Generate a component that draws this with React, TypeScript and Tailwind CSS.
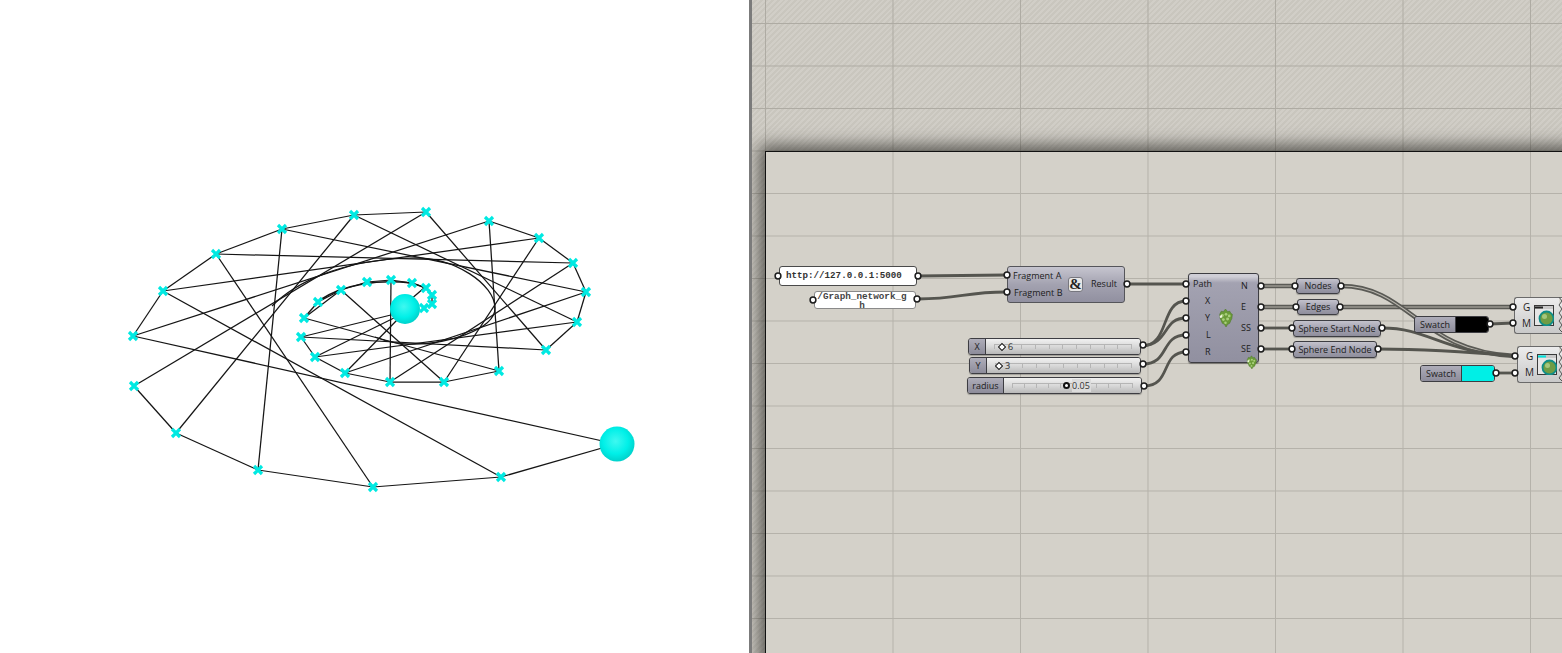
const points: [number, number][] = [
  [405, 309], [424, 308], [432, 304], [432, 295], [426, 288], [412, 283], [391, 280], [367, 282],
  [341, 290], [318, 302], [304, 318], [301, 337], [315, 357], [345, 373], [390, 382], [444, 382],
  [499, 371], [546, 350], [577, 322], [586, 292], [573, 263], [539, 238], [489, 221], [426, 212],
  [354, 215], [282, 229], [216, 254], [163, 291], [133, 336], [134, 386], [176, 433], [258, 470],
  [373, 487], [501, 477], [616, 444],
]

const rows = [[11, 16], [17, 22], [23, 28], [29, 34]]

const edges: [number, number][] = []
rows.forEach(([from, to]) => {
  for (let i = from; i < to; i++) edges.push([i, i + 1])
})
for (let i = 17; i <= 34; i++) edges.push([i, i - 6])
edges.push([14, 6], [15, 8], [16, 10], [10, 9], [9, 8], [10, 8], [8, 7], [7, 6], [6, 5], [5, 4], [4, 3], [3, 2], [2, 1])

const GraphView = () => (
  <svg width="750" height="653" viewBox="0 0 750 653" className="block">
    <defs>
      <radialGradient id="ball" cx="0.46" cy="0.42" r="0.6">
        <stop offset="0" stopColor="#3ff8f0" />
        <stop offset="0.6" stopColor="#00f0e8" />
        <stop offset="1" stopColor="#00cfc9" />
      </radialGradient>
    </defs>
    <g stroke="#151515" strokeWidth="1.25" fill="none">
      {edges.map(([a, b]) => (
        <line key={`${a}-${b}`} x1={points[a][0]} y1={points[a][1]} x2={points[b][0]} y2={points[b][1]} />
      ))}
      <line x1="301" y1="337" x2="395" y2="314" />
      <line x1="315" y1="357" x2="398" y2="316" />
      <line x1="345" y1="373" x2="400" y2="317" />
      <line x1="424" y1="288" x2="410" y2="300" />
      <path d="M272 306C295 283 340 260 410 258C455 256 495 285 495 308C495 330 445 345 410 344C395 344 385 341 375 337" />
      <path d="M320 300C345 283 380 281 400 282C415 283 428 287 433 296" strokeWidth="1.6" />
    </g>
    <circle cx="405" cy="309" r="15" fill="url(#ball)" />
    <circle cx="617" cy="444" r="17.5" fill="url(#ball)" />
    <g stroke="#00e9e2" strokeWidth="3.2" strokeLinecap="butt">
      {points.slice(1, 34).map(([x, y]) => (
        <path key={`${x}-${y}`} d={`M${x - 4} ${y - 4}L${x + 4} ${y + 4}M${x + 4} ${y - 4}L${x - 4} ${y + 4}`} />
      ))}
    </g>
  </svg>
)

const wires = [
  'M918 276L1006 275',
  'M918 299C960 299 965 292 1006 292',
  'M1127 284L1186 284',
  'M1142 346C1170 346 1160 301 1186 301',
  'M1142 346C1170 344 1162 318 1186 318',
  'M1143 364C1170 364 1160 335 1186 335',
  'M1144 386C1172 386 1160 352 1186 352',
  'M1261 328L1293 328',
  'M1261 349L1293 349',
  'M1382 328C1430 328 1440 352 1515 356',
  'M1378 349C1420 349 1470 352 1515 356',
  'M1490 324L1513 323',
  'M1496 373L1515 373',
]

// list wires carry a lighter line down the middle
const listWires = [
  'M1261 286L1296 286',
  'M1261 307L1297 307',
  'M1341 307L1513 307',
  'M1341 286C1410 286 1420 352 1515 356',
]

const Wires = () => (
  <svg width="1562" height="653" viewBox="0 0 1562 653" className="absolute inset-0" fill="none">
    {listWires.map((d) => (
      <g key={d}>
        <path d={d} stroke="#5a5a55" strokeWidth="4.4" />
        <path d={d} stroke="#b9b6ae" strokeWidth="1.1" />
      </g>
    ))}
    {wires.map((d) => (
      <path key={d} d={d} stroke="#55554f" strokeWidth="2.8" />
    ))}
  </svg>
)

const grips: [number, number][] = [
  [778, 276], [918, 276], [813, 300], [917, 299], [1007, 275], [1007, 292], [1127, 284],
  [1143, 345], [1143, 364], [1144, 386],
  [1186, 284], [1186, 301], [1186, 318], [1186, 335], [1186, 352],
  [1261, 286], [1261, 307], [1261, 328], [1261, 349],
  [1295, 286], [1341, 286], [1296, 307], [1340, 307], [1292, 328], [1382, 328], [1292, 349], [1378, 349],
  [1490, 324], [1496, 373], [1513, 307], [1513, 323], [1515, 356], [1515, 373],
]

const Grips = () => (
  <svg width="1562" height="653" viewBox="0 0 1562 653" className="absolute inset-0" fill="#fff" stroke="#1c1c1c" strokeWidth="1.5">
    {grips.map(([x, y]) => (
      <circle key={`${x}-${y}`} cx={x} cy={y} r="2.9" />
    ))}
    <path d="M1559 297l3 4l-3 4l3 4l-3 4l3 4l-3 4l3 4l-3 4l3 3" fill="#d4d1c9" stroke="#555" strokeWidth="1" />
    <path d="M1559 346l3 4l-3 4l3 4l-3 4l3 4l-3 4l3 4l-3 4l3 3" fill="#d4d1c9" stroke="#555" strokeWidth="1" />
  </svg>
)

const Hop = ({ className }: { className: string }) => (
  <svg viewBox="0 0 14 18" className={className}>
    <path d="M3 3l2 .5L7 1l2 2.500l2-.5l1 2l1.500 1l-.5 4l-1 2l-1 2.500l-2 1l-1.500 2.500l-1.500-2.500l-2-1l-1-2.500l-1-2l-.5-4L2 5z" fill="#6a9a38" stroke="#4a7426" strokeWidth="0.5" />
    <g fill="#a9cf7c">
      <circle cx="4" cy="7" r="1.400" />
      <circle cx="7.500" cy="6" r="1.300" />
      <circle cx="10.500" cy="7.500" r="1.300" />
      <circle cx="5" cy="11" r="1.300" />
      <circle cx="9" cy="10.500" r="1.400" />
      <circle cx="7" cy="14" r="1.200" />
    </g>
    <path d="M1.500 7.500l2-1l.5 2.500l-2 .5z" fill="#eef5dd" />
  </svg>
)

const PreviewIcon = ({ tab }: { tab: string }) => (
  <svg viewBox="0 0 20 21" className="absolute left-[19px] top-[7px] h-[21px] w-[20px]">
    <rect x="0.5" y="0.5" width="19" height="20" fill="#e6e6e6" stroke="#3a3a3a" />
    <rect x="1" y="1" width="18" height="3" fill="#c8c8c8" />
    <rect x="1" y="1.500" width="8" height="2" fill={tab} />
    <circle cx="12.500" cy="13.500" r="7" fill="#6f9c45" stroke="#0f8d88" strokeWidth="1.800" />
    <circle cx="10.500" cy="11.500" r="2.500" fill="#a5c77c" />
  </svg>
)

const capsule =
  'absolute flex items-center justify-center rounded-[3px] border border-[#3d3d42] bg-gradient-to-b from-[#c3c2cc] via-[#a3a2b0] to-[#8f8e9c] text-[9px] text-[#1c1c1c] shadow-[0_1px_1px_rgba(0,0,0,0.25)]'

const sliderLabel =
  'flex h-full shrink-0 items-center justify-center border-r border-[#3d3d42] bg-gradient-to-b from-[#aeadb9] to-[#8d8c9a] text-[9px] text-[#1c1c1c]'

const sliderTrack =
  'relative h-full flex-1 bg-gradient-to-b from-[#f1f1f1] via-[#d9d9d9] to-[#b9b9b9]'

const sliderBox =
  'absolute flex overflow-hidden rounded-[3px] border border-[#3d3d42] shadow-[0_1px_1px_rgba(0,0,0,0.25)]'

const Ticks = ({ className }: { className: string }) => (
  <div className={`absolute top-[5px] flex h-[4px] justify-between border-t border-[#b5b5b5] ${className}`}>
    {Array.from({ length: 11 }, (_, i) => (
      <span key={i} className="h-[4px] w-px bg-[#b5b5b5]" />
    ))}
  </div>
)

const Canvas = () => (
  <div className="absolute inset-0 overflow-hidden font-['Open_Sans','Noto_Sans',sans-serif]">
    <Wires />

    <div className="absolute left-[779px] top-[266px] flex h-[20px] w-[138px] items-center rounded-[3px] border border-[#4a4a4a] bg-white pl-[6px] font-['Liberation_Mono',monospace] text-[9.2px] font-bold text-[#333]">
      http://127.0.0.1:5000
    </div>
    <div className="absolute left-[814px] top-[291px] h-[18px] w-[102px] rounded-[3px] border border-[#8a8a8a] bg-white pr-[6px] text-center font-['Liberation_Mono',monospace] text-[9.3px] font-bold leading-[9px] text-[#444]">
      /Graph_network_g
      <br />h
    </div>

    <div className="absolute left-[1007px] top-[266px] h-[37px] w-[118px] rounded-[3px] border border-[#55555a] bg-gradient-to-b from-[#c6c5cf] via-[#a3a2b0] to-[#9190a0] text-[9px] text-[#1c1c1c]">
      <span className="absolute left-[5px] top-[2px]">Fragment A</span>
      <span className="absolute left-[6px] top-[19px]">Fragment B</span>
      <span className="absolute left-[60px] top-[10px] flex h-[15px] w-[15px] items-center justify-center rounded-[3px] border border-[#77777f] bg-[#e7e7e7] font-['Liberation_Serif',serif] text-[15px] font-bold leading-none text-[#222]">
        &amp;
      </span>
      <span className="absolute left-[83px] top-[10px]">Result</span>
    </div>

    <div className={`${sliderBox} left-[968px] top-[338px] h-[17px] w-[173px]`}>
      <div className={`${sliderLabel} w-[17px]`}>X</div>
      <div className={sliderTrack}>
        <Ticks className="left-[8px] right-[8px]" />
        <span className="absolute left-[13px] top-[5px] h-[6px] w-[6px] rotate-45 border border-[#111] bg-white" />
        <span className="absolute left-[22px] top-[1px] text-[9px] text-[#333]">6</span>
      </div>
    </div>
    <div className={`${sliderBox} left-[969px] top-[357px] h-[17px] w-[172px]`}>
      <div className={`${sliderLabel} w-[17px]`}>Y</div>
      <div className={sliderTrack}>
        <Ticks className="left-[8px] right-[8px]" />
        <span className="absolute left-[9px] top-[5px] h-[6px] w-[6px] rotate-45 border border-[#111] bg-white" />
        <span className="absolute left-[18px] top-[1px] text-[9px] text-[#333]">3</span>
      </div>
    </div>
    <div className={`${sliderBox} left-[967px] top-[377px] h-[17px] w-[175px]`}>
      <div className={`${sliderLabel} w-[36px]`}>radius</div>
      <div className={sliderTrack}>
        <Ticks className="left-[8px] right-[8px]" />
        <span className="absolute left-[59px] top-[4px] h-[7px] w-[7px] rounded-full border-2 border-[#111] bg-white" />
        <span className="absolute left-[68px] top-[1px] bg-[#dcdcdc] pr-px text-[9px] leading-[13px] text-[#333]">0.05</span>
      </div>
    </div>

    <div className="absolute left-[1188px] top-[273px] h-[90px] w-[71px] rounded-[3px] border border-[#3d3d42] bg-gradient-to-b from-[#cfced6] from-[3%] via-[#a3a2b1] via-[10%] to-[#9190a0] text-[9px] text-[#1c1c1c] shadow-[0_1px_1px_rgba(0,0,0,0.35)]">
      <span className="absolute left-[4px] top-[3px]">Path</span>
      <span className="absolute left-[16px] top-[20px]">X</span>
      <span className="absolute left-[16px] top-[37px]">Y</span>
      <span className="absolute left-[17px] top-[54px]">L</span>
      <span className="absolute left-[16px] top-[71px]">R</span>
      <span className="absolute left-[52px] top-[5px]">N</span>
      <span className="absolute left-[52px] top-[26px]">E</span>
      <span className="absolute left-[52px] top-[47px]">SS</span>
      <span className="absolute left-[52px] top-[68px]">SE</span>
      <Hop className="absolute left-[29px] top-[34px] h-[19px] w-[15px]" />
    </div>
    <Hop className="absolute left-[1246px] top-[355px] h-[14px] w-[11px]" />

    <div className={`${capsule} left-[1296px] top-[278px] h-[16px] w-[44px]`}>Nodes</div>
    <div className={`${capsule} left-[1297px] top-[299px] h-[16px] w-[42px]`}>Edges</div>
    <div className={`${capsule} left-[1293px] top-[320px] h-[17px] w-[88px]`}>Sphere Start Node</div>
    <div className={`${capsule} left-[1293px] top-[341px] h-[17px] w-[84px]`}>Sphere End Node</div>

    <div className="absolute left-[1414px] top-[316px] flex h-[17px] w-[75px] overflow-hidden rounded-[3px] border border-[#3d3d42] text-[9px] text-[#1c1c1c]">
      <div className={`${sliderLabel} w-[41px]`}>Swatch</div>
      <div className="flex-1 bg-black" />
    </div>
    <div className="absolute left-[1420px] top-[365px] flex h-[17px] w-[75px] overflow-hidden rounded-[3px] border border-[#3d3d42] text-[9px] text-[#1c1c1c]">
      <div className={`${sliderLabel} w-[41px]`}>Swatch</div>
      <div className="flex-1 bg-[#00efe6]" />
    </div>

    <div className="absolute left-[1514px] top-[297px] h-[37px] w-[48px] rounded-l-[3px] border border-r-0 border-[#6a6a6a] bg-gradient-to-b from-[#ececec] to-[#c9c9c9] text-[10px] text-[#1c1c1c]">
      <span className="absolute left-[8px] top-[2px]">G</span>
      <span className="absolute left-[7px] top-[18px]">M</span>
      <PreviewIcon tab="#222222" />
    </div>
    <div className="absolute left-[1517px] top-[346px] h-[37px] w-[45px] rounded-l-[3px] border border-r-0 border-[#6a6a6a] bg-gradient-to-b from-[#ececec] to-[#c9c9c9] text-[10px] text-[#1c1c1c]">
      <span className="absolute left-[8px] top-[2px]">G</span>
      <span className="absolute left-[7px] top-[18px]">M</span>
      <PreviewIcon tab="#00e5e0" />
    </div>

    <Grips />
  </div>
)

const App = () => (
  <div className="relative flex h-[653px] w-[1562px] overflow-hidden bg-white">
    <div className="w-[749px] shrink-0 bg-white shadow-[2px_0_4px_rgba(0,0,0,0.3)]">
      <GraphView />
    </div>
    <div className="relative flex-1 overflow-hidden border-l-[3px] border-[#7b7b7b] bg-[repeating-linear-gradient(135deg,#d1cec7_0,#d1cec7_2px,#c9c6be_2px,#c9c6be_4px)]">
      <div className="absolute inset-0 bg-[linear-gradient(to_right,#aeaba3_1px,transparent_1px),linear-gradient(to_bottom,#aeaba3_1px,transparent_1px)] bg-[length:127.5px_42.5px] bg-[position:13px_23px]" />
      <div className="relative ml-[13px] mt-[151px] h-[520px] w-[820px] border-l border-t border-[#111] bg-[#d4d1c9] bg-[linear-gradient(to_right,#b5b2aa_1px,transparent_1px),linear-gradient(to_bottom,#b5b2aa_1px,transparent_1px)] bg-[length:127.5px_42.5px] bg-[position:-1px_41px] shadow-[0_0_16px_6px_rgba(50,48,45,0.72)]" />
    </div>
    <Canvas />
  </div>
)

export default App
